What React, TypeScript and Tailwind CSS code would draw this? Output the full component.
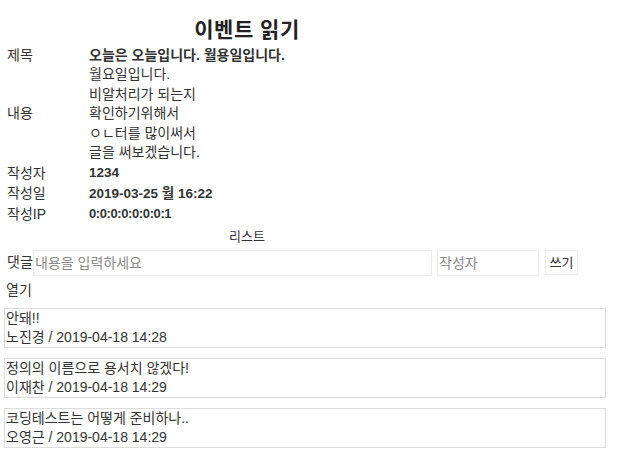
import React from "react";

const font = { fontFamily: '"Liberation Sans", "Noto Sans CJK KR", sans-serif' };

export default function App() {
  const content = [
    "월요일입니다.",
    "비알처리가 되는지",
    "확인하기위해서",
    "ㅇㄴ터를 많이써서",
    "글을 써보겠습니다.",
  ];
  const comments = [
    { text: "안돼!!", author: "노진경", date: "2019-04-18 14:28" },
    { text: "정의의 이름으로 용서치 않겠다!", author: "이재찬", date: "2019-04-18 14:29" },
    { text: "코딩테스트는 어떻게 준비하나..", author: "오영근", date: "2019-04-18 14:29" },
  ];
  return (
    <div className="w-[617px] h-[461px] bg-white text-[#333] text-[14px] overflow-hidden" style={font}>
      <div className="w-[494px]">
        <h1 className="mt-[17px] mb-[3px] h-[25px] leading-[25px] text-center text-[21px] font-bold tracking-[0.5px] text-[#222]">
          이벤트 읽기
        </h1>
        <div className="grid grid-cols-[82px_1fr] pl-[7px]">
          <div className="h-[20px] leading-[20px]">제목</div>
          <div className="h-[20px] leading-[20px] font-bold">오늘은 오늘입니다. 월용일입니다.</div>
          <div className="flex items-center">내용</div>
          <div className="leading-[19.6px]">
            {content.map((c, i) => (
              <div key={i}>{c}</div>
            ))}
          </div>
          <div className="h-[20px] leading-[20px]">작성자</div>
          <div className="h-[20px] leading-[20px] font-bold text-[13.5px]">1234</div>
          <div className="h-[21px] leading-[21px]">작성일</div>
          <div className="h-[21px] leading-[21px] font-bold text-[13.5px]">2019-03-25 월 16:22</div>
          <div className="h-[20px] leading-[20px]">작성IP</div>
          <div className="h-[20px] leading-[20px] font-bold text-[13px] tracking-[-0.4px]">0:0:0:0:0:0:0:1</div>
        </div>
        <div className="h-[26px] leading-[26px] text-center text-[13px]">리스트</div>
      </div>
      <div className="flex items-center h-[26px] pl-[7px]">
        <span className="w-[26px]">댓글</span>
        <input
          className="w-[399px] h-[26px] border border-[#eeeeee] px-[1px] outline-none placeholder:text-[#8a8a8a]"
          placeholder="내용을 입력하세요"
        />
        <input
          className="ml-[5px] w-[102px] h-[26px] border border-[#eeeeee] px-[1px] outline-none placeholder:text-[#8a8a8a]"
          placeholder="작성자"
        />
        <button className="ml-[6px] w-[33px] h-[25px] border border-[#eeeeee] bg-white text-[13px] text-[#333]">
          쓰기
        </button>
      </div>
      <div className="h-[26px] leading-[26px] mt-[1px] pl-[6px]">열기</div>
      <div className="mt-[5px] pl-[4px] flex flex-col gap-[10px]">
        {comments.map((c, i) => (
          <div key={i} className="w-[602px] h-[40px] border border-[#dddddd] pl-[1px] leading-[19px]">
            <div>{c.text}</div>
            <div>
              {c.author} / {c.date}
            </div>
          </div>
        ))}
      </div>
    </div>
  );
}
